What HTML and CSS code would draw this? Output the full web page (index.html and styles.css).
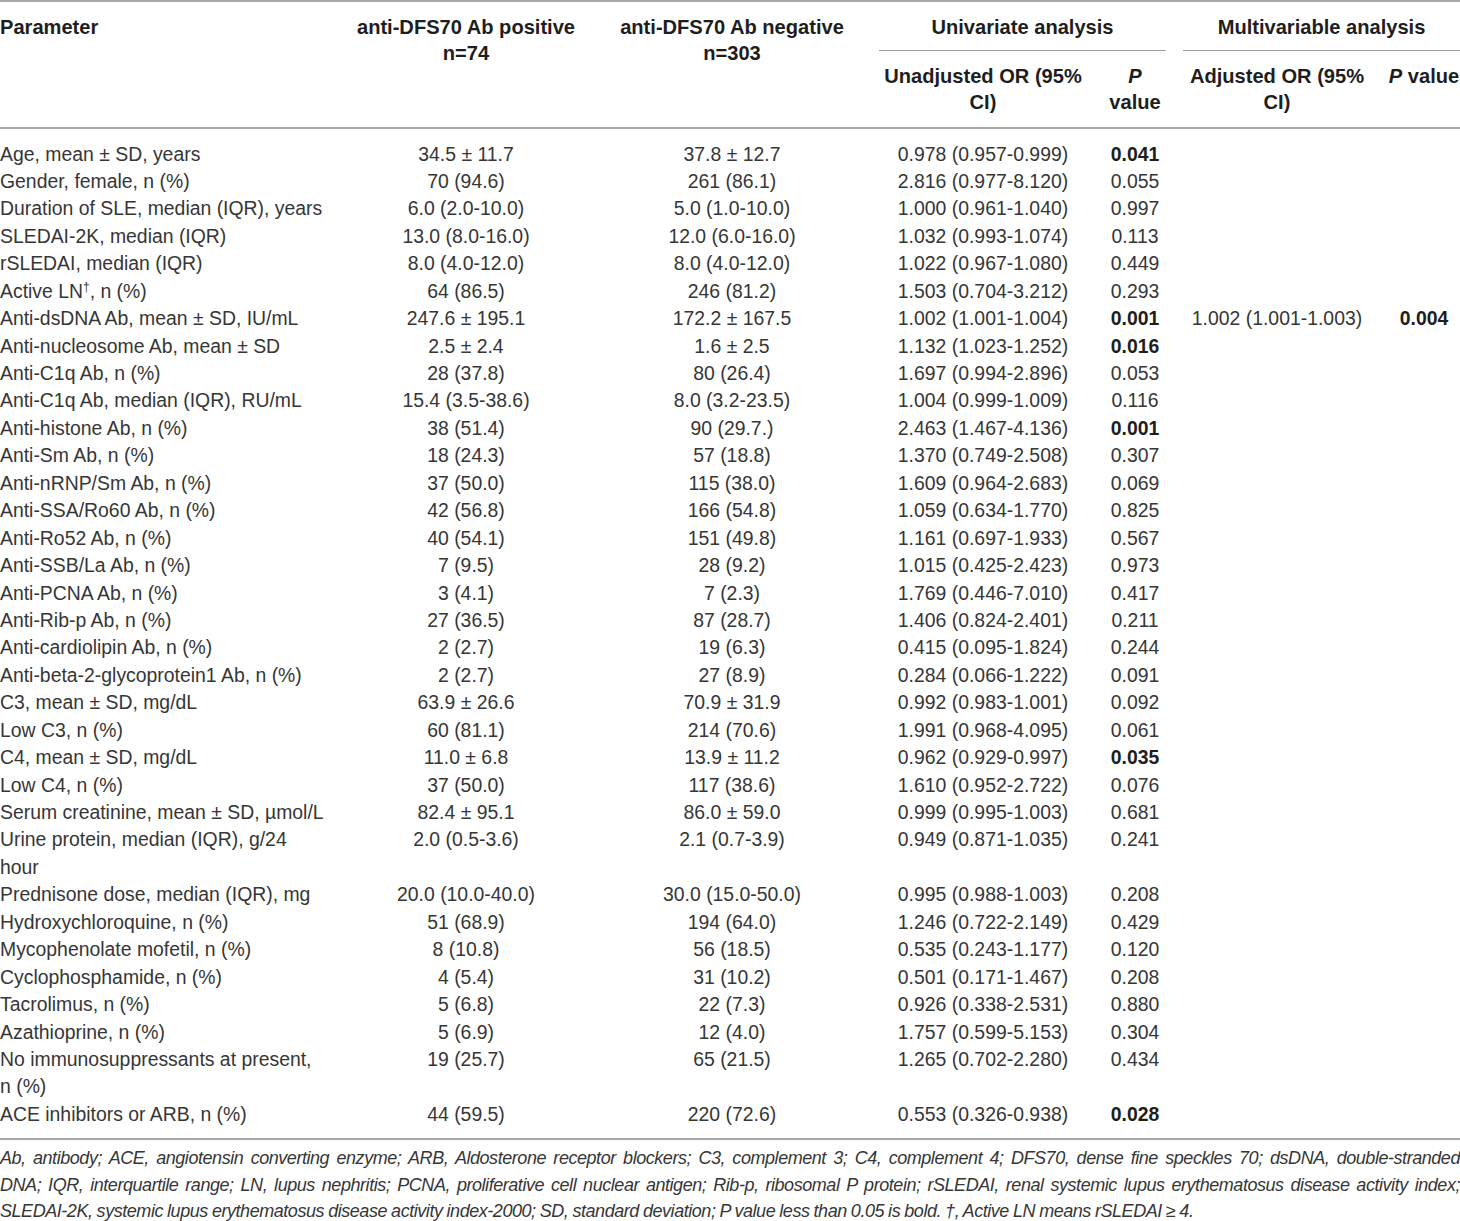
FILE: index.html
```html
<!DOCTYPE html>
<html lang="en">
<head>
<meta charset="utf-8">
<title>Table</title>
<link rel="stylesheet" href="styles.css">
</head>
<body>
<div class="page">
<table class="data">
  <colgroup>
    <col class="c-param">
    <col class="c-pos">
    <col class="c-neg">
    <col class="c-or">
    <col class="c-p">
    <col class="c-aor">
    <col class="c-ap">
  </colgroup>
  <thead>
    <tr class="hr1">
      <th rowspan="2" class="left">Parameter</th>
      <th rowspan="2">anti-DFS70 Ab positive<br>n=74</th>
      <th rowspan="2">anti-DFS70 Ab negative<br>n=303</th>
      <th colspan="2" class="group"><div class="group-label">Univariate analysis</div></th>
      <th colspan="2" class="group last"><div class="group-label">Multivariable analysis</div></th>
    </tr>
    <tr class="hr2">
      <th>Unadjusted OR (95%<br>CI)</th>
      <th><i>P</i><br>value</th>
      <th>Adjusted OR (95%<br>CI)</th>
      <th class="last"><i>P</i> value</th>
    </tr>
  </thead>
  <tbody>
    <tr><td>Age, mean ± SD, years</td><td>34.5 ± 11.7</td><td>37.8 ± 12.7</td><td>0.978 (0.957-0.999)</td><td class="b">0.041</td><td></td><td class="last"></td></tr>
    <tr><td>Gender, female, n (%)</td><td>70 (94.6)</td><td>261 (86.1)</td><td>2.816 (0.977-8.120)</td><td>0.055</td><td></td><td class="last"></td></tr>
    <tr><td>Duration of SLE, median (IQR), years</td><td>6.0 (2.0-10.0)</td><td>5.0 (1.0-10.0)</td><td>1.000 (0.961-1.040)</td><td>0.997</td><td></td><td class="last"></td></tr>
    <tr><td>SLEDAI-2K, median (IQR)</td><td>13.0 (8.0-16.0)</td><td>12.0 (6.0-16.0)</td><td>1.032 (0.993-1.074)</td><td>0.113</td><td></td><td class="last"></td></tr>
    <tr><td>rSLEDAI, median (IQR)</td><td>8.0 (4.0-12.0)</td><td>8.0 (4.0-12.0)</td><td>1.022 (0.967-1.080)</td><td>0.449</td><td></td><td class="last"></td></tr>
    <tr><td>Active LN<sup>†</sup>, n (%)</td><td>64 (86.5)</td><td>246 (81.2)</td><td>1.503 (0.704-3.212)</td><td>0.293</td><td></td><td class="last"></td></tr>
    <tr><td>Anti-dsDNA Ab, mean ± SD, IU/mL</td><td>247.6 ± 195.1</td><td>172.2 ± 167.5</td><td>1.002 (1.001-1.004)</td><td class="b">0.001</td><td>1.002 (1.001-1.003)</td><td class="b last">0.004</td></tr>
    <tr><td>Anti-nucleosome Ab, mean ± SD</td><td>2.5 ± 2.4</td><td>1.6 ± 2.5</td><td>1.132 (1.023-1.252)</td><td class="b">0.016</td><td></td><td class="last"></td></tr>
    <tr><td>Anti-C1q Ab, n (%)</td><td>28 (37.8)</td><td>80 (26.4)</td><td>1.697 (0.994-2.896)</td><td>0.053</td><td></td><td class="last"></td></tr>
    <tr><td>Anti-C1q Ab, median (IQR), RU/mL</td><td>15.4 (3.5-38.6)</td><td>8.0 (3.2-23.5)</td><td>1.004 (0.999-1.009)</td><td>0.116</td><td></td><td class="last"></td></tr>
    <tr><td>Anti-histone Ab, n (%)</td><td>38 (51.4)</td><td>90 (29.7.)</td><td>2.463 (1.467-4.136)</td><td class="b">0.001</td><td></td><td class="last"></td></tr>
    <tr><td>Anti-Sm Ab, n (%)</td><td>18 (24.3)</td><td>57 (18.8)</td><td>1.370 (0.749-2.508)</td><td>0.307</td><td></td><td class="last"></td></tr>
    <tr><td>Anti-nRNP/Sm Ab, n (%)</td><td>37 (50.0)</td><td>115 (38.0)</td><td>1.609 (0.964-2.683)</td><td>0.069</td><td></td><td class="last"></td></tr>
    <tr><td>Anti-SSA/Ro60 Ab, n (%)</td><td>42 (56.8)</td><td>166 (54.8)</td><td>1.059 (0.634-1.770)</td><td>0.825</td><td></td><td class="last"></td></tr>
    <tr><td>Anti-Ro52 Ab, n (%)</td><td>40 (54.1)</td><td>151 (49.8)</td><td>1.161 (0.697-1.933)</td><td>0.567</td><td></td><td class="last"></td></tr>
    <tr><td>Anti-SSB/La Ab, n (%)</td><td>7 (9.5)</td><td>28 (9.2)</td><td>1.015 (0.425-2.423)</td><td>0.973</td><td></td><td class="last"></td></tr>
    <tr><td>Anti-PCNA Ab, n (%)</td><td>3 (4.1)</td><td>7 (2.3)</td><td>1.769 (0.446-7.010)</td><td>0.417</td><td></td><td class="last"></td></tr>
    <tr><td>Anti-Rib-p Ab, n (%)</td><td>27 (36.5)</td><td>87 (28.7)</td><td>1.406 (0.824-2.401)</td><td>0.211</td><td></td><td class="last"></td></tr>
    <tr><td>Anti-cardiolipin Ab, n (%)</td><td>2 (2.7)</td><td>19 (6.3)</td><td>0.415 (0.095-1.824)</td><td>0.244</td><td></td><td class="last"></td></tr>
    <tr><td>Anti-beta-2-glycoprotein1 Ab, n (%)</td><td>2 (2.7)</td><td>27 (8.9)</td><td>0.284 (0.066-1.222)</td><td>0.091</td><td></td><td class="last"></td></tr>
    <tr><td>C3, mean ± SD, mg/dL</td><td>63.9 ± 26.6</td><td>70.9 ± 31.9</td><td>0.992 (0.983-1.001)</td><td>0.092</td><td></td><td class="last"></td></tr>
    <tr><td>Low C3, n (%)</td><td>60 (81.1)</td><td>214 (70.6)</td><td>1.991 (0.968-4.095)</td><td>0.061</td><td></td><td class="last"></td></tr>
    <tr><td>C4, mean ± SD, mg/dL</td><td>11.0 ± 6.8</td><td>13.9 ± 11.2</td><td>0.962 (0.929-0.997)</td><td class="b">0.035</td><td></td><td class="last"></td></tr>
    <tr><td>Low C4, n (%)</td><td>37 (50.0)</td><td>117 (38.6)</td><td>1.610 (0.952-2.722)</td><td>0.076</td><td></td><td class="last"></td></tr>
    <tr><td>Serum creatinine, mean ± SD, µmol/L</td><td>82.4 ± 95.1</td><td>86.0 ± 59.0</td><td>0.999 (0.995-1.003)</td><td>0.681</td><td></td><td class="last"></td></tr>
    <tr><td>Urine protein, median (IQR), g/24<br>hour</td><td>2.0 (0.5-3.6)</td><td>2.1 (0.7-3.9)</td><td>0.949 (0.871-1.035)</td><td>0.241</td><td></td><td class="last"></td></tr>
    <tr><td>Prednisone dose, median (IQR), mg</td><td>20.0 (10.0-40.0)</td><td>30.0 (15.0-50.0)</td><td>0.995 (0.988-1.003)</td><td>0.208</td><td></td><td class="last"></td></tr>
    <tr><td>Hydroxychloroquine, n (%)</td><td>51 (68.9)</td><td>194 (64.0)</td><td>1.246 (0.722-2.149)</td><td>0.429</td><td></td><td class="last"></td></tr>
    <tr><td>Mycophenolate mofetil, n (%)</td><td>8 (10.8)</td><td>56 (18.5)</td><td>0.535 (0.243-1.177)</td><td>0.120</td><td></td><td class="last"></td></tr>
    <tr><td>Cyclophosphamide, n (%)</td><td>4 (5.4)</td><td>31 (10.2)</td><td>0.501 (0.171-1.467)</td><td>0.208</td><td></td><td class="last"></td></tr>
    <tr><td>Tacrolimus, n (%)</td><td>5 (6.8)</td><td>22 (7.3)</td><td>0.926 (0.338-2.531)</td><td>0.880</td><td></td><td class="last"></td></tr>
    <tr><td>Azathioprine, n (%)</td><td>5 (6.9)</td><td>12 (4.0)</td><td>1.757 (0.599-5.153)</td><td>0.304</td><td></td><td class="last"></td></tr>
    <tr><td>No immunosuppressants at present,<br>n (%)</td><td>19 (25.7)</td><td>65 (21.5)</td><td>1.265 (0.702-2.280)</td><td>0.434</td><td></td><td class="last"></td></tr>
    <tr><td>ACE inhibitors or ARB, n (%)</td><td>44 (59.5)</td><td>220 (72.6)</td><td>0.553 (0.326-0.938)</td><td class="b">0.028</td><td></td><td class="last"></td></tr>
  </tbody>
</table>
<div class="notes">
  <span class="note-line justify">Ab, antibody; ACE, angiotensin converting enzyme; ARB, Aldosterone receptor blockers; C3, complement 3; C4, complement 4; DFS70, dense fine speckles 70; dsDNA, double-stranded</span>
  <span class="note-line justify">DNA; IQR, interquartile range; LN, lupus nephritis; PCNA, proliferative cell nuclear antigen; Rib-p, ribosomal P protein; rSLEDAI, renal systemic lupus erythematosus disease activity index;</span>
  <span class="note-line">SLEDAI-2K, systemic lupus erythematosus disease activity index-2000; SD, standard deviation; P value less than 0.05 is bold. †, Active LN means rSLEDAI ≥ 4.</span>
</div>
</div>
</body>
</html>
```
FILE: styles.css
```css
html, body {
  margin: 0;
  padding: 0;
  background: #ffffff;
}

body {
  font-family: "Liberation Sans", Arial, sans-serif;
  color: #363636;
}

.page {
  width: 1460px;
}

.data {
  width: 1460px;
  table-layout: fixed;
  border-collapse: collapse;
  border-top: 2px solid #a8a8a8;
  font-size: 19.4px;
}

.c-param { width: 338.5px; }
.c-pos { width: 255px; }
.c-neg { width: 277px; }
.c-or { width: 225px; }
.c-p { width: 79px; }
.c-aor { width: 205px; }
.c-ap { width: 80.5px; }

th {
  font-weight: bold;
  font-size: 20.1px;
  color: #1e1e1e;
  text-align: center;
  vertical-align: top;
  line-height: 26px;
  padding: 0 8.5px;
}

th.left {
  text-align: left;
  padding-left: 0;
}

th.last, td.last {
  padding-right: 0;
}

.hr1 th {
  padding-top: 12px;
}

.hr1 th[rowspan] {
  border-bottom: 2px solid #a8a8a8;
}

.hr1 th.group {
  padding-bottom: 0;
}

.group-label {
  padding-bottom: 10px;
  border-bottom: 1.5px solid #9c9c9c;
}

.hr2 th {
  padding-top: 12px;
  padding-bottom: 12px;
  border-bottom: 2px solid #a8a8a8;
}

td {
  vertical-align: top;
  text-align: center;
  line-height: 27.43px;
  padding: 0 8.5px;
  white-space: nowrap;
}

td:first-child {
  text-align: left;
  padding-left: 0;
}

tbody tr:first-child td {
  padding-top: 11.5px;
}

tbody tr:last-child td {
  padding-bottom: 10px;
  border-bottom: 2px solid #a8a8a8;
}

td.b {
  font-weight: bold;
  color: #1e1e1e;
}

sup {
  font-size: 12px;
  line-height: 0;
  vertical-align: 7px;
}

.notes {
  padding-top: 5px;
  font-style: italic;
  font-size: 18px;
  letter-spacing: -0.45px;
  word-spacing: -0.5px;
  line-height: 26.5px;
  color: #363636;
}

.note-line {
  display: block;
  white-space: nowrap;
}

.note-line.justify {
  text-align: justify;
  text-align-last: justify;
  white-space: normal;
}
```
